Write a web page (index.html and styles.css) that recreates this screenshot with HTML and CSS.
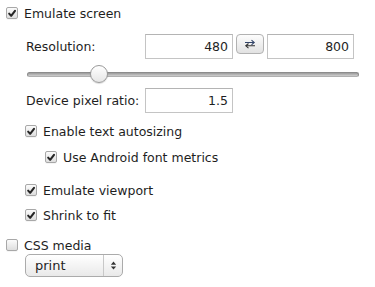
FILE: index.html
```html
<!DOCTYPE html>
<html lang="en">
<head>
    <meta charset="UTF-8">
    <meta name="viewport" content="width=device-width, initial-scale=1.0">
    <title>Emulation</title>
    <link rel="stylesheet" href="styles.css">
</head>
<body>
    <div class="panel">
        <label class="check-row first">
            <span class="box checked"><svg viewBox="0 0 12 12"><path d="M2.6 6.2 L5 8.8 L9.6 2.8"/></svg></span>
            Emulate screen
        </label>

        <div class="group">
            <div class="field-row resolution">
                <span class="field-label">Resolution:</span>
                <input class="num wide" type="text" value="480">
                <button class="swap" type="button">
                    <svg viewBox="0 0 14 10">
                        <path class="arr-top" d="M2 3.5 H11 M8.5 1.2 L11.2 3.5 L8.5 5.8"/>
                        <path class="arr-bottom" d="M12 6.8 H3 M5.5 4.5 L2.8 6.8 L5.5 9.1"/>
                    </svg>
                </button>
                <input class="num narrow" type="text" value="800">
            </div>

            <div class="slider">
                <div class="track"></div>
                <div class="thumb"></div>
            </div>

            <div class="field-row ratio">
                <span class="field-label">Device pixel ratio:</span>
                <input class="num wide" type="text" value="1.5">
            </div>

            <label class="check-row autosize">
                <span class="box checked"><svg viewBox="0 0 12 12"><path d="M2.6 6.2 L5 8.8 L9.6 2.8"/></svg></span>
                Enable text autosizing
            </label>
            <label class="check-row sub">
                <span class="box checked"><svg viewBox="0 0 12 12"><path d="M2.6 6.2 L5 8.8 L9.6 2.8"/></svg></span>
                Use Android font metrics
            </label>

            <label class="check-row viewport">
                <span class="box checked"><svg viewBox="0 0 12 12"><path d="M2.6 6.2 L5 8.8 L9.6 2.8"/></svg></span>
                Emulate viewport
            </label>
            <label class="check-row shrink">
                <span class="box checked"><svg viewBox="0 0 12 12"><path d="M2.6 6.2 L5 8.8 L9.6 2.8"/></svg></span>
                Shrink to fit
            </label>
        </div>

        <label class="check-row media-row">
            <span class="box"></span>
            CSS media
        </label>
        <div class="group">
            <div class="select">
                <span class="select-text">print</span>
                <span class="select-arrows">
                    <svg viewBox="0 0 8 12">
                        <path d="M1 5 L4 1.5 L7 5 Z M1 7 L4 10.5 L7 7 Z"/>
                    </svg>
                </span>
            </div>
        </div>
    </div>
</body>
</html>
```

FILE: styles.css
```css
body {
    margin: 0;
    background-color: #fff;
    color: #1e1e1e;
    font-family: 'DejaVu Sans', 'Lucida Grande', sans-serif;
    font-size: 12.5px;
}

.panel {
    padding: 5px 0 0 6px;
}

.group {
    padding-left: 19px;
}

.check-row {
    display: flex;
    align-items: center;
    gap: 6px;
    height: 16px;
}

.box {
    width: 10px;
    height: 10px;
    border: 1px solid #a8a8a8;
    border-radius: 2px;
    background: linear-gradient(#fbfbfb, #dedede);
    box-shadow: 0 1px 0 rgba(0, 0, 0, 0.04);
    display: flex;
    align-items: center;
    justify-content: center;
    flex-shrink: 0;
}

.box svg {
    width: 11px;
    height: 11px;
    fill: none;
    stroke: #262626;
    stroke-width: 2.5;
    stroke-linecap: round;
    stroke-linejoin: round;
}

.field-row {
    display: flex;
    align-items: flex-start;
    height: 25px;
}

.field-label {
    width: 120px;
    padding-left: 1px;
    box-sizing: border-box;
    line-height: 25px;
}

.resolution {
    margin-top: 13px;
}

.num {
    height: 25px;
    box-sizing: border-box;
    border: 1px solid #c4c4c4;
    border-top-color: #b4b4b4;
    background-color: #fff;
    font-family: inherit;
    font-size: inherit;
    color: #1e1e1e;
    text-align: right;
    padding: 0 4px 0 0;
    margin: 0;
    outline: none;
}

.wide {
    width: 88px;
}

.narrow {
    width: 87px;
}

.swap {
    width: 28px;
    height: 20px;
    margin: 0 3px 0 3px;
    padding: 0;
    border: 1px solid #b2b2b2;
    border-radius: 4px;
    background: linear-gradient(#fdfdfd, #e2e2e2);
    display: flex;
    align-items: center;
    justify-content: center;
}

.swap svg {
    width: 14px;
    height: 10px;
    fill: none;
    stroke-width: 1.1;
}

.arr-top {
    stroke: #33456a;
}

.arr-bottom {
    stroke: #333;
}

.slider {
    position: relative;
    height: 18px;
    margin: 6px 0 0 2px;
    width: 332px;
}

.track {
    position: absolute;
    left: 0;
    right: 0;
    top: 7px;
    height: 5px;
    box-sizing: border-box;
    border: 1px solid #8c8c8c;
    border-bottom-color: #b0b0b0;
    border-radius: 3px;
    background: linear-gradient(#9a9a9a, #cfcfcf);
}

.thumb {
    position: absolute;
    left: 63px;
    top: 0;
    width: 18px;
    height: 18px;
    box-sizing: border-box;
    border: 1px solid #9a9a9a;
    border-radius: 50%;
    background: linear-gradient(#ffffff, #e6e6e6);
    box-shadow: 0 1px 1px rgba(0, 0, 0, 0.15);
}

.ratio {
    margin-top: 5px;
}

.autosize {
    margin-top: 10px;
}

.sub {
    margin-top: 10px;
    padding-left: 20px;
}

.viewport {
    margin-top: 17px;
}

.shrink {
    margin-top: 9px;
}

.media-row {
    margin-top: 14px;
}

.select {
    margin-top: 1px;
    width: 98px;
    height: 23px;
    box-sizing: border-box;
    border: 1px solid #ababab;
    border-radius: 5px;
    background: linear-gradient(#ffffff, #e9e9e9);
    display: flex;
    align-items: stretch;
}

.select-text {
    flex: 1;
    padding-left: 9px;
    line-height: 21px;
    font-size: 13px;
}

.select-arrows {
    width: 18px;
    border-left: 1px solid #c8c8c8;
    display: flex;
    align-items: center;
    justify-content: center;
}

.select-arrows svg {
    width: 7px;
    height: 11px;
    fill: #333;
}
```
